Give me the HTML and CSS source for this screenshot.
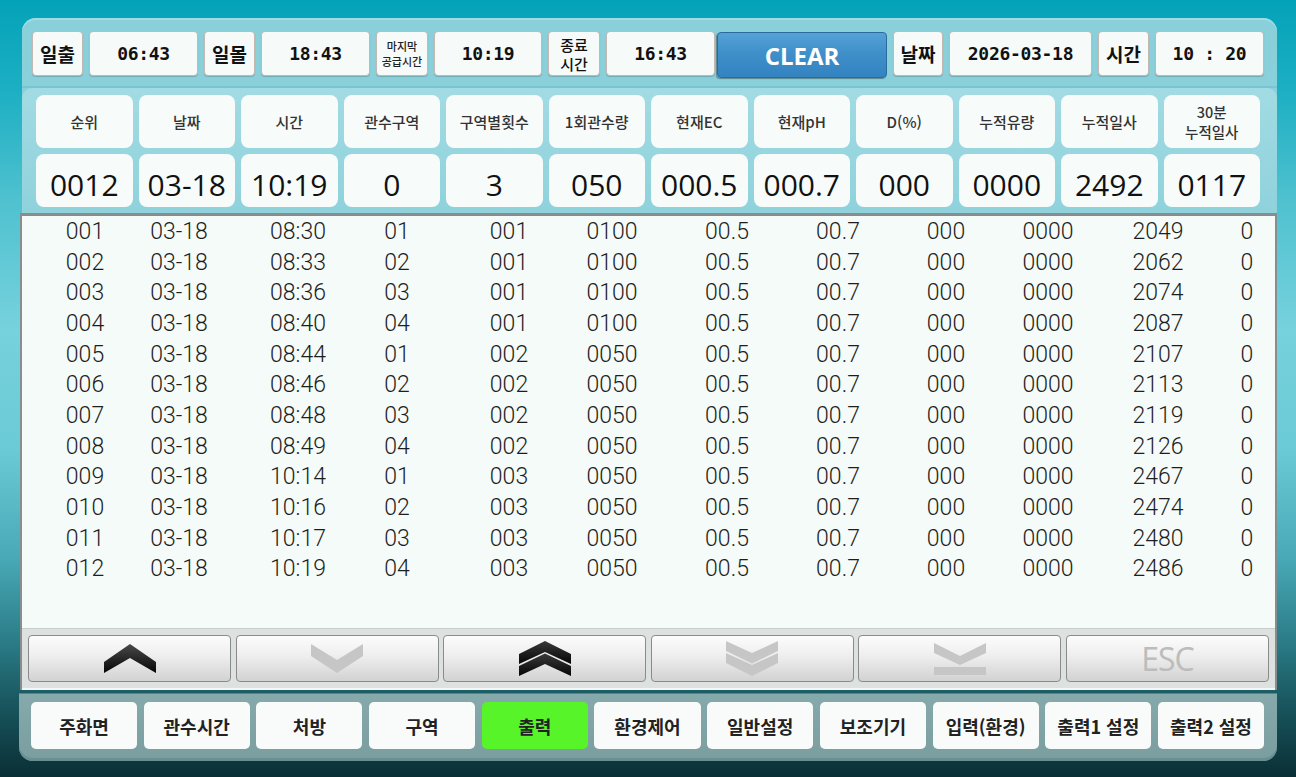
FILE: index.html
```html
<!DOCTYPE html>
<html lang="ko">
<head>
  <meta charset="UTF-8">
  <title>관수 출력 기록</title>
  <link rel="stylesheet" href="styles.css">
</head>
<body>
  <div class="screen">
    <section class="top-panel">
      <div class="status-bar">
        <div class="tag">일출</div>
        <div class="clock w109">06:43</div>
        <div class="tag w51">일몰</div>
        <div class="clock w109">18:43</div>
        <div class="tag small"><span>마지막</span><span>공급시간</span></div>
        <div class="clock w108">10:19</div>
        <div class="tag mid"><span>종료</span><span>시간</span></div>
        <div class="clock w109">16:43</div>
        <button class="clear-button">CLEAR</button>
        <div class="tag w50">날짜</div>
        <div class="clock w143">2026-03-18</div>
        <div class="tag">시간</div>
        <div class="clock w109">10 : 20</div>
      </div>

      <div class="summary">
        <div class="cell label">순위</div>
        <div class="cell label">날짜</div>
        <div class="cell label">시간</div>
        <div class="cell label">관수구역</div>
        <div class="cell label">구역별횟수</div>
        <div class="cell label">1회관수량</div>
        <div class="cell label">현재EC</div>
        <div class="cell label">현재pH</div>
        <div class="cell label">D(%)</div>
        <div class="cell label">누적유량</div>
        <div class="cell label">누적일사</div>
        <div class="cell label two-line"><span>30분</span><span>누적일사</span></div>

        <div class="cell value">0012</div>
        <div class="cell value">03-18</div>
        <div class="cell value">10:19</div>
        <div class="cell value">0</div>
        <div class="cell value">3</div>
        <div class="cell value">050</div>
        <div class="cell value">000.5</div>
        <div class="cell value">000.7</div>
        <div class="cell value">000</div>
        <div class="cell value">0000</div>
        <div class="cell value">2492</div>
        <div class="cell value">0117</div>
      </div>
    </section>

    <section class="log">
      <div class="log-body" id="logBody"></div>

      <div class="pager">
        <button class="page-button">
          <svg width="52" height="29" viewBox="0 0 52 29">
            <defs>
              <linearGradient id="darkA" x1="0" y1="0" x2="0" y2="1">
                <stop offset="0" stop-color="#4a4a4a"/>
                <stop offset="1" stop-color="#050505"/>
              </linearGradient>
            </defs>
            <polygon points="0,18 26,0 52,18 52,29 26,14 0,29" fill="url(#darkA)"/>
          </svg>
        </button>
        <button class="page-button">
          <svg width="52" height="29" viewBox="0 0 52 29">
            <polygon points="0,0 26,16 52,0 52,12 26,29 0,12" fill="#c6c6c6"/>
          </svg>
        </button>
        <button class="page-button">
          <svg width="52" height="35" viewBox="0 0 52 35">
            <defs>
              <linearGradient id="darkB" x1="0" y1="0" x2="0" y2="1">
                <stop offset="0" stop-color="#3a3a3a"/>
                <stop offset="1" stop-color="#050505"/>
              </linearGradient>
            </defs>
            <polygon points="0,13 26,0 52,13 52,23 26,11 0,23" fill="url(#darkB)"/>
            <polygon points="0,25 26,12.5 52,25 52,35 26,23 0,35" fill="url(#darkB)"/>
          </svg>
        </button>
        <button class="page-button">
          <svg width="52" height="35" viewBox="0 0 52 35">
            <polygon points="0,0 26,12 52,0 52,10 26,22.5 0,10" fill="#c6c6c6"/>
            <polygon points="0,12 26,24 52,12 52,22 26,35 0,22" fill="#c6c6c6"/>
          </svg>
        </button>
        <button class="page-button">
          <svg width="52" height="32" viewBox="0 0 52 32">
            <polygon points="0,0 26,13 52,0 52,10 26,22 0,10" fill="#c6c6c6"/>
            <rect x="0" y="24" width="52" height="8" fill="#c6c6c6"/>
          </svg>
        </button>
        <button class="page-button esc">ESC</button>
      </div>
    </section>

    <nav class="menu">
      <button class="tab">주화면</button>
      <button class="tab">관수시간</button>
      <button class="tab">처방</button>
      <button class="tab">구역</button>
      <button class="tab active">출력</button>
      <button class="tab">환경제어</button>
      <button class="tab">일반설정</button>
      <button class="tab">보조기기</button>
      <button class="tab">입력(환경)</button>
      <button class="tab">출력1 설정</button>
      <button class="tab">출력2 설정</button>
    </nav>
  </div>

  <script>
    // irrigation output log: 순위, 날짜, 시간, 구역, 횟수, 관수량, EC, pH, D, 유량, 일사, 30분일사
    const rows = [
      ["001", "03-18", "08:30", "01", "001", "0100", "00.5", "00.7", "000", "0000", "2049", "0"],
      ["002", "03-18", "08:33", "02", "001", "0100", "00.5", "00.7", "000", "0000", "2062", "0"],
      ["003", "03-18", "08:36", "03", "001", "0100", "00.5", "00.7", "000", "0000", "2074", "0"],
      ["004", "03-18", "08:40", "04", "001", "0100", "00.5", "00.7", "000", "0000", "2087", "0"],
      ["005", "03-18", "08:44", "01", "002", "0050", "00.5", "00.7", "000", "0000", "2107", "0"],
      ["006", "03-18", "08:46", "02", "002", "0050", "00.5", "00.7", "000", "0000", "2113", "0"],
      ["007", "03-18", "08:48", "03", "002", "0050", "00.5", "00.7", "000", "0000", "2119", "0"],
      ["008", "03-18", "08:49", "04", "002", "0050", "00.5", "00.7", "000", "0000", "2126", "0"],
      ["009", "03-18", "10:14", "01", "003", "0050", "00.5", "00.7", "000", "0000", "2467", "0"],
      ["010", "03-18", "10:16", "02", "003", "0050", "00.5", "00.7", "000", "0000", "2474", "0"],
      ["011", "03-18", "10:17", "03", "003", "0050", "00.5", "00.7", "000", "0000", "2480", "0"],
      ["012", "03-18", "10:19", "04", "003", "0050", "00.5", "00.7", "000", "0000", "2486", "0"]
    ];

    const body = document.getElementById("logBody");
    rows.forEach(cols => {
      const row = document.createElement("div");
      row.className = "log-row";
      cols.forEach(text => {
        const span = document.createElement("span");
        span.textContent = text;
        row.appendChild(span);
      });
      body.appendChild(row);
    });
  </script>
</body>
</html>
```

FILE: styles.css
```css
body {
  margin: 0;
  height: 777px;
  overflow: hidden;
  font-family: "Noto Sans CJK KR", "Noto Sans", sans-serif;
  background: linear-gradient(180deg,
    #04a2b8 0px,
    #1cafc3 90px,
    #4fc1cf 200px,
    #76d2dd 330px,
    #6acad5 450px,
    #48a8b5 560px,
    #2b7d88 640px,
    #1a5860 700px,
    #0a2f35 777px);
}
button {
  font-family: inherit;
  cursor: pointer;
}
.screen {
  padding: 18px 19px 0 20px;
}

/* ---- top panel: clock bar + summary ---- */
.top-panel {
  margin-left: 2px;
  background: #8ad0db;
  border-radius: 14px 14px 0 0;
  box-shadow: inset 0 2px 0 #9edbe4;
}
.status-bar {
  display: flex;
  align-items: flex-start;
  gap: 6px;
  height: 55px;
  padding: 13px 0 0 10px;
  border-bottom: 2px solid #76c6d3;
}
.tag,
.clock {
  box-sizing: border-box;
  height: 45px;
  display: flex;
  align-items: center;
  justify-content: center;
  background: #f6faf8;
  border: 1px solid #c4b8b2;
  border-radius: 4px;
  box-shadow: 0 1px 1px rgba(0, 0, 0, 0.18);
  color: #111;
}
.tag {
  width: 51px;
  font-size: 19px;
  font-weight: 700;
}
.tag.w50 { width: 50px; }
.tag.w51 { width: 51px; }
.tag.small,
.tag.mid {
  width: 52px;
  flex-direction: column;
}
.tag.small {
  font-size: 11px;
  line-height: 15px;
  font-weight: 500;
  color: #222;
}
.tag.mid {
  font-size: 15px;
  line-height: 19px;
  font-weight: 500;
}
.tag:last-of-type { width: 52px; }
.clock {
  font-family: "DejaVu Sans Mono", "Liberation Mono", monospace;
  font-weight: 700;
  font-size: 18px;
  letter-spacing: -0.3px;
}
.w108 { width: 108px; }
.w109 { width: 109px; }
.w143 { width: 143px; }
.clear-button {
  width: 170px;
  height: 46px;
  margin: 1px 0 0 -4px;
  border: 1px solid #2b6a9c;
  border-radius: 4px;
  background: linear-gradient(180deg, #55a2d6 0%, #3f8fca 45%, #3383c1 100%);
  box-shadow: -1px 1px 1px rgba(0, 0, 0, 0.35);
  color: #fff;
  font-family: "Open Sans", "DejaVu Sans", sans-serif;
  font-weight: 700;
  font-size: 24px;
}

.summary {
  display: grid;
  grid-template-columns: repeat(12, 1fr);
  grid-template-rows: 53px 53px;
  gap: 6px;
  padding: 7px 17px 6px 14px;
  background: linear-gradient(180deg, #a2dbe3, #8fd2dc);
  border-radius: 10px 10px 0 0;
}
.cell {
  display: flex;
  align-items: center;
  justify-content: center;
  background: #f7fbfa;
  border-radius: 8px;
}
.cell.label {
  font-size: 15px;
  font-weight: 500;
  color: #333;
}
.cell.two-line {
  flex-direction: column;
  font-size: 14.5px;
  line-height: 20px;
}
.cell.value {
  padding-top: 8px;
  box-sizing: border-box;
  font-family: "Open Sans", "Noto Sans", sans-serif;
  font-size: 30px;
  color: #111;
}

/* ---- output log ---- */
.log {
  border: 2px solid #8a8d8d;
  border-top-width: 3px;
  border-bottom: none;
  background: #f5fbf8;
}
.log-body {
  height: 413px;
  overflow: hidden;
}
/* each column track starts at the centre of its value */
.log-row {
  display: grid;
  grid-template-columns: 94px 119px 99px 112px 103px 115px 111px 108px 102px 110px 89px 40px;
  height: 30.7px;
  align-items: center;
  padding-left: 63px;
  font-family: "Roboto", "Liberation Sans", sans-serif;
  font-weight: 300;
  font-size: 23px;
  color: #1e1e1e;
}
.log-row span {
  justify-self: start;
  white-space: nowrap;
  transform: translateX(-50%);
}

.pager {
  display: grid;
  grid-template-columns: repeat(6, 1fr);
  gap: 4.6px;
  padding: 6px 6px;
  background: #dde1df;
  border-top: 1px solid #c9cdcb;
  border-bottom: 2px solid #f2f6f4;
  height: 47px;
  margin-top: -1px;
}
.page-button {
  display: flex;
  align-items: center;
  justify-content: center;
  padding: 0;
  border: 1px solid #8a8a8a;
  border-radius: 4px;
  background: linear-gradient(180deg, #fcfcfc 0%, #eeeeee 45%, #d2d2d2 100%);
}
.page-button.esc {
  font-family: "Open Sans", "DejaVu Sans", sans-serif;
  font-size: 32px;
  color: #bcbcbc;
  letter-spacing: -1px;
}

/* ---- bottom menu ---- */
.menu {
  display: grid;
  grid-template-columns: repeat(11, 1fr);
  gap: 6.7px;
  height: 47px;
  margin: 3px 0 0 -1px;
  padding: 8px 13px 12px 12px;
  background: linear-gradient(180deg, #86a9ab 0%, #7a9ea0 100%);
  border-top: 1px solid #5d8286;
  border-radius: 0 0 14px 14px;
  box-shadow: inset 0 -3px 0 #6a8f92;
}
.tab {
  padding: 0;
  border: none;
  border-radius: 5px;
  background: #f8fbf9;
  font-size: 18px;
  font-weight: 700;
  color: #222;
  white-space: nowrap;
}
.tab.active {
  background: #58f42a;
}
```
